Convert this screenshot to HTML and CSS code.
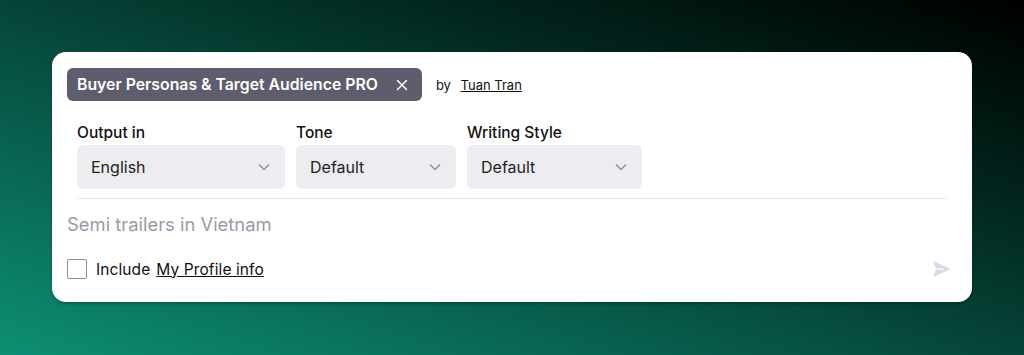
FILE: index.html
```html
<!DOCTYPE html>
<html lang="en">
<head>
    <meta charset="UTF-8">
    <meta name="viewport" content="width=device-width, initial-scale=1.0">
    <title>Prompt</title>
    <link rel="stylesheet" href="styles.css">
</head>
<body>
    <!-- Carte du prompt -->
    <div class="card">
        <div class="head">
            <span class="pill">Buyer Personas &amp; Target Audience PRO
                <svg class="close" viewBox="0 0 12 12" width="12" height="12"><path d="M1.5 1.5l9 9M10.5 1.5l-9 9" stroke="#fff" stroke-width="1.5" stroke-linecap="round" fill="none"/></svg>
            </span>
            <span class="by">by <a href="#">Tuan Tran</a></span>
        </div>

        <div class="options">
            <div class="field f1">
                <label>Output in</label>
                <div class="select">English <svg viewBox="0 0 12 8" width="12" height="8"><path d="M1 1.5l5 5 5-5" stroke="#8e8ea0" stroke-width="1.5" fill="none"/></svg></div>
            </div>
            <div class="field f2">
                <label>Tone</label>
                <div class="select">Default <svg viewBox="0 0 12 8" width="12" height="8"><path d="M1 1.5l5 5 5-5" stroke="#8e8ea0" stroke-width="1.5" fill="none"/></svg></div>
            </div>
            <div class="field f3">
                <label>Writing Style</label>
                <div class="select">Default <svg viewBox="0 0 12 8" width="12" height="8"><path d="M1 1.5l5 5 5-5" stroke="#8e8ea0" stroke-width="1.5" fill="none"/></svg></div>
            </div>
        </div>
        <div class="line"></div>

        <div class="prompt">Semi trailers in Vietnam</div>

        <div class="foot">
            <label class="check"><span class="box"></span> Include <a href="#">My Profile info</a></label>
            <svg class="send" viewBox="0 0 20 20" width="20" height="20"><path d="M1.5 2l17 8-17 8 2.5-8z" fill="#d9d9e3"/><path d="M4 10h8" stroke="#fff" stroke-width="1.2"/></svg>
        </div>
    </div>
</body>
</html>
```

FILE: styles.css
```css
* {
    box-sizing: border-box;
    font-family: 'Inter', 'Liberation Sans', Arial, sans-serif;
}
body {
    margin: 0;
    width: 1024px;
    height: 355px;
    overflow: hidden;
    background: linear-gradient(to top right, #0d8f74 0%, #064c3e 45%, #02241c 72%, #000 100%);
    padding: 52px 52px 0 52px;
}
.card {
    background: #fff;
    border-radius: 14px;
    height: 250px;
    padding: 16px 15px 0 15px;
    box-shadow: 0 2px 3px rgba(0, 0, 0, 0.25);
}
.head {
    display: flex;
    align-items: center;
}
.pill {
    display: flex;
    align-items: center;
    height: 33px;
    padding: 0 14px 0 10px;
    background: #5d5d6e;
    color: #fff;
    border-radius: 6px;
    font-size: 15.8px;
    font-weight: 600;
    letter-spacing: 0;
}
.close {
    margin-left: 18px;
}
.by {
    margin-left: 14px;
    font-size: 13px;
    color: #111;
}
.by a {
    color: #111;
    margin-left: 6px;
}
.options {
    display: flex;
    gap: 11px;
    padding: 0 10px;
    margin-top: 22px;
}
.field label {
    display: block;
    font-size: 15.5px;
    font-weight: 500;
    color: #111;
    margin-bottom: 3px;
    letter-spacing: 0;
}
.f1 { width: 208px; }
.f2 { width: 160px; }
.f3 { width: 175px; }
.select {
    display: flex;
    align-items: center;
    justify-content: space-between;
    height: 44px;
    padding: 0 15px 0 14px;
    background: #ececf1;
    border-radius: 6px;
    font-size: 16px;
    color: #222;
}
.line {
    height: 1px;
    background: #e5e5ec;
    margin: 9px 10px 0 10px;
}
.prompt {
    margin-top: 14px;
    font-size: 18.4px;
    color: #9b9aa8;
}
.foot {
    display: flex;
    align-items: center;
    justify-content: space-between;
    margin-top: 24px;
    padding-right: 5px;
}
.check {
    display: flex;
    align-items: center;
    font-size: 15.5px;
    letter-spacing: 0.1px;
    color: #111;
}
.box {
    width: 20px;
    height: 20px;
    border: 1px solid #8e8ea0;
    border-radius: 2px;
    margin-right: 9px;
}
.check a {
    color: #111;
    margin-left: 6px;
}
```
